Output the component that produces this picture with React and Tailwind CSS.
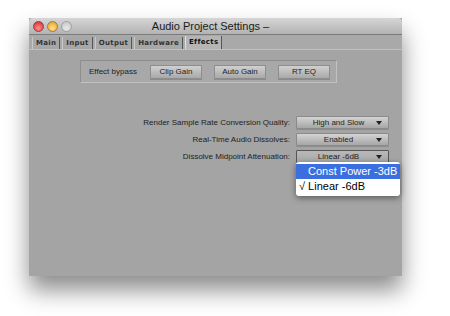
import React from "react";

const tabs = ["Main", "Input", "Output", "Hardware", "Effects"];

const rows = [
  { label: "Render Sample Rate Conversion Quality:", value: "High and Slow" },
  { label: "Real-Time Audio Dissolves:", value: "Enabled" },
  { label: "Dissolve Midpoint Attenuation:", value: "Linear -6dB", open: true },
];

function Dropdown({ value, open }) {
  return (
    <div className="relative">
      <div
        className={
          "flex h-[13px] w-[93px] items-center justify-between whitespace-nowrap rounded-[1px] border pl-[8px] pr-[6px] text-[8px] leading-none text-[#222] " +
          (open
            ? "border-[#555] bg-gradient-to-b from-[#b9b9b9] to-[#a8a8a8]"
            : "border-[#8a8a8a] bg-gradient-to-b from-[#d4d4d4] to-[#a6a6a6] shadow-[0_1px_0_#8e8e8e]")
        }
      >
        <span className="flex-1 text-center">{value}</span>
        <span className="ml-1 h-0 w-0 border-x-[3px] border-t-[4px] border-x-transparent border-t-[#222]" />
      </div>
      {open && (
        <div className="absolute left-0 top-[12px] z-10 w-[104px] whitespace-nowrap rounded-[3px] bg-white py-[2px] text-[11px] leading-[15px] text-black shadow-[0_2px_6px_rgba(0,0,0,0.45)]">
          <div className="bg-[#3b6fe0] pl-[12px] text-white">Const Power -3dB</div>
          <div className="pl-[3px]">√ Linear -6dB</div>
        </div>
      )}
    </div>
  );
}

function BypassButton({ children }) {
  return (
    <div className="flex h-[14px] w-[52px] items-center justify-center whitespace-nowrap border border-[#8d8d8d] bg-gradient-to-b from-[#d0d0d0] to-[#a9a9a9] text-[8px] text-[#222] shadow-[0_1px_0_#8b8b8b]">
      {children}
    </div>
  );
}

export default function App() {
  return (
    <div className="h-[316px] w-[450px] overflow-hidden bg-white pl-[29px] pt-[18px] font-['Liberation_Sans',sans-serif]">
      <div className="flex h-[258px] w-[373px] flex-col bg-[#a4a4a4] shadow-[0_14px_22px_rgba(0,0,0,0.45)]">
        {/* title bar */}
        <div className="relative flex h-[17px] items-center rounded-t-[4px] border-b border-[#7c7c7c] bg-gradient-to-b from-[#d6d6d6] to-[#b3b3b3] px-[4px]">
          <div className="flex gap-[3px]">
            <span className="h-[11px] w-[11px] rounded-full border border-[#9b3a3a] bg-[radial-gradient(circle_at_50%_70%,#ff8a8a,#d22a2a)]" />
            <span className="h-[11px] w-[11px] rounded-full border border-[#a97b2a] bg-[radial-gradient(circle_at_50%_70%,#ffe08a,#e29a22)]" />
            <span className="h-[11px] w-[11px] rounded-full border border-[#a0a0a0] bg-[radial-gradient(circle_at_50%_70%,#e8e8e8,#c2c2c2)]" />
          </div>
          <div className="absolute inset-x-0 top-0 flex h-[17px] items-center justify-center pr-[10px] text-[11px] text-[#1a1a1a]">
            Audio Project Settings –
          </div>
        </div>

        {/* tabs */}
        <div className="flex h-[15px] items-end gap-[2px] border-b border-[#c0c0c0] bg-[#a9a9a9] pl-[3px]">
          {tabs.map((t) => (
            <div
              key={t}
              className={
                "flex h-[12px] items-center border-r border-[#555] px-[3px] font-['DejaVu_Sans',sans-serif] text-[7px] font-bold tracking-[0.3px] " +
                (t === "Effects"
                  ? "h-[13px] border-l border-l-[#e0e0e0] bg-[#b5b5b5] text-[#111]"
                  : "border-l border-l-[#c8c8c8] bg-[#a7a7a7] text-[#333]")
              }
            >
              {t}
            </div>
          ))}
        </div>

        {/* content */}
        <div className="flex flex-1 flex-col bg-[#a4a4a4]">
          <div className="ml-[51px] mt-[10px] flex h-[23px] w-[257px] items-center gap-[12px] border border-[#c2c2c2] border-l-[#8e8e8e] border-t-[#8e8e8e] bg-[#a8a8a8] pl-[8px]">
            <span className="w-[49px] whitespace-nowrap text-[8px] text-[#222]">Effect bypass</span>
            <BypassButton>Clip Gain</BypassButton>
            <BypassButton>Auto Gain</BypassButton>
            <BypassButton>RT EQ</BypassButton>
          </div>

          <div className="mt-[33px] flex flex-col gap-[4px]">
            {rows.map((r) => (
              <div key={r.label} className="flex items-center">
                <span className="w-[267px] whitespace-nowrap pr-[6px] text-right text-[8px] text-[#222]">
                  {r.label}
                </span>
                <Dropdown value={r.value} open={r.open} />
              </div>
            ))}
          </div>
        </div>
      </div>
    </div>
  );
}
